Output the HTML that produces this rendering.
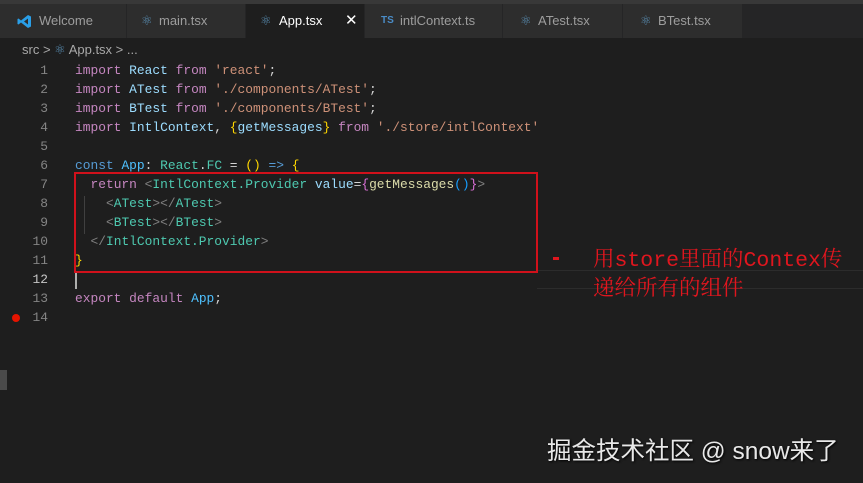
<!DOCTYPE html>
<html><head><meta charset="utf-8"><style>
*{margin:0;padding:0;box-sizing:border-box}
body{width:863px;height:483px;background:#1e1e1e;overflow:hidden;position:relative;font-family:"Liberation Sans","Noto Sans CJK SC",sans-serif}
.top{position:absolute;left:0;top:0;width:863px;height:4px;background:#383838}
.tabs{position:absolute;left:0;top:4px;width:863px;height:34px;background:#252526}
.tab{position:absolute;top:0;height:34px;background:#2d2d2d;color:#9d9d9d;font-size:13px;line-height:34px;border-right:1px solid #252526}
.tab.act{background:#1e1e1e;color:#fff}
.ic{position:absolute;top:0}
.bc{position:absolute;left:22px;top:40px;color:#a9a9a9;font-size:13px;line-height:20px}
.code{position:absolute;left:0;top:61px;font-family:"Liberation Mono",monospace;font-size:12.9px;line-height:19px;color:#d4d4d4;white-space:pre}
.ln{position:absolute;left:0;width:48px;text-align:right;color:#858585}
.tx{position:absolute;left:75px}
.k{color:#c586c0}.v{color:#9cdcfe}.s{color:#ce9178}.b{color:#569cd6}.t{color:#4ec9b0}.g{color:#808080}.f{color:#dcdcaa}.y{color:#ffd700}.p{color:#da70d6}.c{color:#4fc1ff}.bl{color:#179fff}
</style></head><body>
<div class="top"></div>
<div class="tabs">
<div class="tab" style="left:0;width:127px"><svg class="ic" style="left:17px;top:10px" width="15" height="15" viewBox="0 0 15 15"><path d="M11 1 L14 2.5 V12.5 L11 14 L4 8.5 L1.5 10.5 L0.5 10 V5 L1.5 4.5 L4 6.5 Z M11 4.5 L7 7.5 L11 10.5Z" fill="#2a9fe8" fill-rule="evenodd"/></svg><span style="position:absolute;left:39px">Welcome</span></div>
<div class="tab" style="left:127px;width:119px"><span style="position:absolute;left:14px;color:#5a8fb5">⚛</span><span style="position:absolute;left:32px">main.tsx</span></div>
<div class="tab act" style="left:246px;width:119px"><span style="position:absolute;left:14px;color:#5a8fb5">⚛</span><span style="position:absolute;left:33px">App.tsx</span><span style="position:absolute;left:99px;font-size:15px">✕</span></div>
<div class="tab" style="left:365px;width:138px"><span style="position:absolute;left:16px;color:#4a8cc7;font-size:10px;font-weight:bold">TS</span><span style="position:absolute;left:35px">intlContext.ts</span></div>
<div class="tab" style="left:503px;width:120px"><span style="position:absolute;left:17px;color:#5a8fb5">⚛</span><span style="position:absolute;left:35px">ATest.tsx</span></div>
<div class="tab" style="left:623px;width:120px"><span style="position:absolute;left:17px;color:#5a8fb5">⚛</span><span style="position:absolute;left:35px">BTest.tsx</span></div>
</div>
<div class="bc">src &gt; <span style="color:#5a8fb5">⚛</span> App.tsx &gt; ...</div>
<div style="position:absolute;left:537px;top:270px;width:326px;height:19px;border-top:1px solid #2c2c2c;border-bottom:1px solid #2c2c2c"></div>
<div class="code">
<div class="ln" style="top:0">1</div><div class="tx" style="top:0"><span class="k">import</span> <span class="v">React</span> <span class="k">from</span> <span class="s">'react'</span>;</div>
<div class="ln" style="top:19px">2</div><div class="tx" style="top:19px"><span class="k">import</span> <span class="v">ATest</span> <span class="k">from</span> <span class="s">'./components/ATest'</span>;</div>
<div class="ln" style="top:38px">3</div><div class="tx" style="top:38px"><span class="k">import</span> <span class="v">BTest</span> <span class="k">from</span> <span class="s">'./components/BTest'</span>;</div>
<div class="ln" style="top:57px">4</div><div class="tx" style="top:57px"><span class="k">import</span> <span class="v">IntlContext</span>, <span class="y">{</span><span class="v">getMessages</span><span class="y">}</span> <span class="k">from</span> <span class="s">'./store/intlContext'</span></div>
<div class="ln" style="top:76px">5</div>
<div class="ln" style="top:95px">6</div><div class="tx" style="top:95px"><span class="b">const</span> <span class="c">App</span>: <span class="t">React</span>.<span class="t">FC</span> = <span class="y">()</span> <span class="b">=&gt;</span> <span class="y">{</span></div>
<div class="ln" style="top:114px">7</div><div class="tx" style="top:114px">  <span class="k">return</span> <span class="g">&lt;</span><span class="t">IntlContext.Provider</span> <span class="v">value</span>=<span class="p">{</span><span class="f">getMessages</span><span class="bl">()</span><span class="p">}</span><span class="g">&gt;</span></div>
<div class="ln" style="top:133px">8</div><div class="tx" style="top:133px">    <span class="g">&lt;</span><span class="t">ATest</span><span class="g">&gt;&lt;/</span><span class="t">ATest</span><span class="g">&gt;</span></div>
<div class="ln" style="top:152px">9</div><div class="tx" style="top:152px">    <span class="g">&lt;</span><span class="t">BTest</span><span class="g">&gt;&lt;/</span><span class="t">BTest</span><span class="g">&gt;</span></div>
<div class="ln" style="top:171px">10</div><div class="tx" style="top:171px">  <span class="g">&lt;/</span><span class="t">IntlContext.Provider</span><span class="g">&gt;</span></div>
<div class="ln" style="top:190px">11</div><div class="tx" style="top:190px"><span class="y">}</span></div>
<div class="ln" style="top:209px;color:#c6c6c6">12</div>
<div class="ln" style="top:228px">13</div><div class="tx" style="top:228px"><span class="k">export</span> <span class="k">default</span> <span class="c">App</span>;</div>
<div class="ln" style="top:247px">14</div>
</div>
<div style="position:absolute;left:84px;top:196px;width:1px;height:38px;background:#404040"></div>
<div style="position:absolute;left:75px;top:271px;width:2px;height:18px;background:#aeafad"></div>
<div style="position:absolute;left:12px;top:314px;width:8px;height:8px;border-radius:50%;background:#e51400"></div>
<div style="position:absolute;left:74px;top:172px;width:464px;height:101px;border:2px solid #d0111b"></div>
<div style="position:absolute;left:553px;top:257px;width:6px;height:3px;background:#e0161e"></div>
<div style="position:absolute;left:593px;top:247px;color:#e0161e;font-family:'Liberation Mono','Noto Serif CJK SC',serif;font-size:21.5px;line-height:29px;white-space:nowrap">用store里面的Contex传<br>递给所有的组件</div>
<div style="position:absolute;left:0;top:370px;width:7px;height:20px;background:#4a4a4a"></div>
<div style="position:absolute;left:547px;top:435px;color:#e8e8e8;font-size:24.5px;line-height:34px;white-space:nowrap;text-shadow:1px 1px 2px #000">掘金技术社区 @ snow来了</div>
</body></html>
